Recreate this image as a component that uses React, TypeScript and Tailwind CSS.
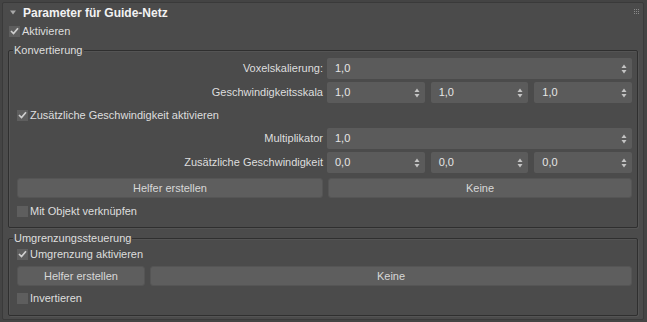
import React from 'react';

const Spinner = () => (
  <svg width="6" height="10" viewBox="0 0 6 10" className="shrink-0">
    <path d="M3 0.5L5.5 4H0.5Z" fill="#c4c4c4" />
    <path d="M3 9.5L5.5 6H0.5Z" fill="#c4c4c4" />
  </svg>
);

const SpinBox = ({ value = '', className = '' }: { value?: string; className?: string }) => (
  <div
    className={`h-[21px] flex items-center justify-between pl-[8px] pr-[5px] bg-[#5b5b5b] rounded-[2px] text-[#e6e6e6] ${className}`}
  >
    <span>{value}</span>
    <Spinner />
  </div>
);

const Check = ({ checked, label }: { checked?: boolean; label: string }) => (
  <div className="flex items-center h-[16px]">
    <div className="w-[11px] h-[11px] bg-[#5e5e5e] flex items-center justify-center mr-[2px]">
      {checked && (
        <svg width="9" height="8" viewBox="0 0 9 8">
          <path d="M1 4L3.5 6.5L8 1.2" stroke="#cfcfcf" strokeWidth="1.7" fill="none" />
        </svg>
      )}
    </div>
    <span>{label}</span>
  </div>
);

const Btn = ({ label, className = '' }: { label: string; className?: string }) => (
  <div
    className={`h-[20px] flex items-center justify-center bg-[#5e5e5e] rounded-[3px] border border-[#555555] text-[#d8d8d8] ${className}`}
  >
    {label}
  </div>
);

const Group = ({ title, children, className = '' }: { title: string; children: React.ReactNode; className?: string }) => (
  <div className={`relative border border-[#2f2f2f] rounded-[2px] shadow-[inset_1px_1px_0_#545454,1px_1px_0_#545454] ${className}`}>
    <span className="absolute -top-[9px] left-[4px] px-[1px] bg-[#4b4b4b] leading-[16px]">{title}</span>
    {children}
  </div>
);

const Row = ({ label, children }: { label: string; children: React.ReactNode }) => (
  <div className="flex items-center gap-[4px]">
    <div className="w-[306px] text-right">{label}</div>
    <div className="flex-1 flex gap-[6px]">{children}</div>
  </div>
);

export default function App() {
  return (
    <div
      className="w-[647px] h-[322px] bg-[#444444] pt-[2px] pl-[2px] pr-[3px] text-[11px] text-[#dedede]"
      style={{ fontFamily: '"Liberation Sans", Arial, sans-serif' }}
    >
      <div className="h-[318px] bg-[#4b4b4b] border border-[#3a3a3a] rounded-[2px] flex flex-col">
        <div className="h-[19px] flex items-center pl-[7px] relative">
          <svg width="6" height="5" viewBox="0 0 6 5" className="mr-[7px]">
            <path d="M0 0.5H6L3 4.5Z" fill="#a8a8a8" />
          </svg>
          <span className="font-bold text-[12px] text-[#f2f2f2]">Parameter für Guide-Netz</span>
          <div className="absolute right-[4px] top-[6px] grid grid-cols-3 gap-[1px]">
            {Array.from({ length: 9 }).map((_, i) => (
              <div key={i} className="w-[1px] h-[1px] bg-[#8a8a8a]" />
            ))}
          </div>
        </div>
        <div className="pl-[6px] mt-[1px]">
          <Check checked label="Aktivieren" />
        </div>
        <Group title="Konvertierung" className="mx-[5px] mt-[11px] h-[178px] pl-[8px] pr-[5px] pt-[7px]">
          <div className="flex flex-col gap-[3px]">
            <Row label="Voxelskalierung:">
              <SpinBox value="1,0" className="flex-1" />
            </Row>
            <Row label="Geschwindigkeitsskala">
              <SpinBox value="1,0" className="flex-1" />
              <SpinBox value="1,0" className="flex-1" />
              <SpinBox value="1,0" className="flex-1" />
            </Row>
          </div>
          <div className="mt-[4px]">
            <Check checked label="Zusätzliche Geschwindigkeit aktivieren" />
          </div>
          <div className="flex flex-col gap-[3px] mt-[5px]">
            <Row label="Multiplikator">
              <SpinBox value="1,0" className="flex-1" />
            </Row>
            <Row label="Zusätzliche Geschwindigkeit">
              <SpinBox value="0,0" className="flex-1" />
              <SpinBox value="0,0" className="flex-1" />
              <SpinBox value="0,0" className="flex-1" />
            </Row>
          </div>
          <div className="flex gap-[5px] mt-[5px]">
            <Btn label="Helfer erstellen" className="w-[306px]" />
            <Btn label="Keine" className="flex-1" />
          </div>
          <div className="mt-[5px]">
            <Check label="Mit Objekt verknüpfen" />
          </div>
        </Group>
        <Group title="Umgrenzungssteuerung" className="mx-[5px] mt-[10px] h-[78px] pl-[8px] pr-[5px] pt-[7px]">
          <Check checked label="Umgrenzung aktivieren" />
          <div className="flex gap-[5px] mt-[4px]">
            <Btn label="Helfer erstellen" className="w-[128px]" />
            <Btn label="Keine" className="flex-1" />
          </div>
          <div className="mt-[4px]">
            <Check label="Invertieren" />
          </div>
        </Group>
      </div>
    </div>
  );
}
